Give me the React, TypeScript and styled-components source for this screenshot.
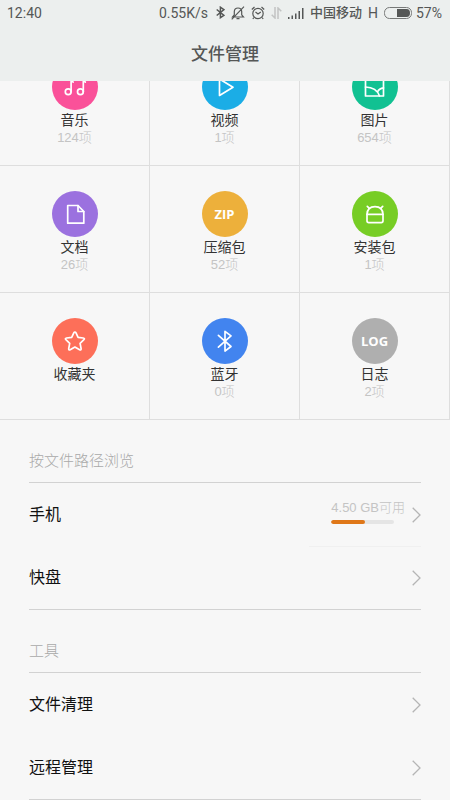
import React from "react";
import styled, { createGlobalStyle } from "styled-components";

const GlobalStyle = createGlobalStyle`
  * { box-sizing: border-box; }
  body {
    margin: 0;
    background: #f7f7f7;
    font-family: "Liberation Sans", "Noto Sans CJK SC", sans-serif;
  }
  button {
    margin: 0;
    padding: 0;
    border: 0;
    background: none;
    font: inherit;
    color: inherit;
    cursor: pointer;
  }
`;

const Header = styled.header`
  position: sticky;
  top: 0;
  z-index: 1;
  height: 81px;
  background: #ecefee;
  color: #555756;
`;

const StatusBar = styled.div`
  display: flex;
  align-items: center;
  justify-content: space-between;
  height: 25px;
  padding: 0 8px 0 7px;
  font-family: Roboto, "Noto Sans CJK SC", sans-serif;
  font-size: 14px;
  line-height: 20px;
  white-space: nowrap;
`;

const StatusGroup = styled.div`
  display: flex;
  align-items: center;
  gap: 6px;
`;

const Speed = styled.span`
  margin-right: 2px;
`;

const Battery = styled.div`
  display: flex;
  align-items: center;
  gap: 4px;
`;

const Carrier = styled.span`
  font-size: 13px;
  font-weight: 500;
`;

const Title = styled.h1`
  margin: 0;
  padding-top: 17px;
  font-size: 17px;
  line-height: 26px;
  font-weight: 500;
  text-align: center;
`;

const Grid = styled.div`
  display: grid;
  grid-template-columns: repeat(3, 1fr);
  margin-top: -42px;
`;

const Tile = styled.button`
  display: flex;
  flex-direction: column;
  align-items: center;
  height: 127px;
  padding-top: 25px;
  border-right: 1px solid #dedede;
  border-bottom: 1px solid #dedede;
`;

const Disc = styled.span<{ $color: string }>`
  display: flex;
  align-items: center;
  justify-content: center;
  width: 46px;
  height: 46px;
  border-radius: 50%;
  background: ${(p) => p.$color};
  color: #fff;
  font-family: "Open Sans", sans-serif;
  font-size: 13px;
  font-weight: 700;
`;

const TileName = styled.span`
  font-size: 14px;
  line-height: 20px;
  color: #333;
`;

const Muted = styled.span`
  font-size: 13px;
  line-height: 16px;
  font-weight: 300;
  color: #c4c4c4;
`;

const Section = styled.section`
  margin: 0 29px;
  border-bottom: 1px solid #d2d2d2;
`;

const SectionTitle = styled.h2`
  margin: 0;
  padding: 31px 0 11px;
  border-bottom: 1px solid #d2d2d2;
  font-size: 15px;
  line-height: 20px;
  font-weight: 300;
  color: #a9a9a9;
`;

const Row = styled.button<{ $divided?: boolean }>`
  display: flex;
  align-items: center;
  width: 100%;
  height: 63px;
  background: ${(p) =>
    p.$divided
      ? "linear-gradient(#f0f0f0, #f0f0f0) right top / 112px 1px no-repeat"
      : "none"};
`;

const RowName = styled.span`
  flex: 1;
  padding-top: 1px;
  font-size: 16px;
  line-height: 24px;
  text-align: left;
  color: #111;
`;

const Storage = styled.span`
  display: flex;
  flex-direction: column;
  gap: 4px;
  margin-right: 7px;
  padding-bottom: 6px;
  text-align: left;
`;

const Meter = styled.span`
  width: 63px;
  height: 4px;
  border-radius: 2px;
  background: #e5e5e5;
  overflow: hidden;
`;

const MeterFill = styled.span`
  display: block;
  height: 100%;
  border-radius: 2px;
  background: #df7719;
`;

type Shape = "music" | "video" | "image" | "doc" | "android" | "star" | "bluetooth";

const shapes: Record<Shape, React.ReactNode> = {
  music: (
    <>
      <circle cx="16.2" cy="27.7" r="2.9" />
      <circle cx="28.4" cy="27.7" r="2.9" />
      <path d="M19.1 27.7V14q0 3 2 4M31.3 27.7V14q0 3 2 4" />
    </>
  ),
  video: <path d="M17.5 15v16.5L31 23.2Z" />,
  image: (
    <>
      <path d="M13.5 14.5h18V32h-18Z" />
      <path d="M13.5 23q11 .3 14 9M25.5 28q1.5-3.7 6-4.2" />
    </>
  ),
  doc: (
    <>
      <path d="M15.7 14.5H26l5.800 6v11.700H15.700Z" />
      <path d="M26 14.5v6h5.8" />
    </>
  ),
  android: (
    <>
      <path d="M15 23.4v6.4q0 1.800 1.800 1.800h12.400q1.800 0 1.800-1.800v-6.400Z" />
      <path d="M15 23.4q.3-7.800 8-7.800t8 7.800M15.300 15.300l2.300 2.300M30.700 15.300l-2.300 2.300" />
    </>
  ),
  star: (
    <path d="M22.9 14q.7 0 1.100.9l2.100 4.500 5.100.6q2 .4.700 1.700l-3.800 3.600 1 5.300q.1 1.900-1.500 1.200l-4.700-2.700-4.700 2.700q-1.600.7-1.500-1.200l1-5.300-3.800-3.600q-1.300-1.300.7-1.700l5.100-.6 2.100-4.500q.4-.9 1.100-.9Z" />
  ),
  bluetooth: <path d="M16.4 17.4 29 28.5l-6 4.6V13.3l6 4.6-12.6 11.2" />,
};

const ShapeIcon = ({ shape }: { shape: Shape }) => (
  <svg width="46" height="46" viewBox="0 0 46 46" fill="none" stroke="#fff" strokeWidth="1.7" strokeLinejoin="round" strokeLinecap="round" aria-hidden="true">
    {shapes[shape]}
  </svg>
);

const Chevron = () => (
  <svg width="9" height="16" viewBox="0 0 9 16" fill="none" stroke="#b5b5b5" strokeWidth="1.3" aria-hidden="true">
    <path d="M.7.7 8 8 .7 15.3" />
  </svg>
);

const StatusIcons = () => (
  <>
    <svg width="9" height="13" viewBox="0 0 9 13" fill="none" stroke="#555756" strokeWidth="1.5" aria-hidden="true">
      <path d="M.7 3.5 8 9.3l-3.6 2.4V1.2L8 3.7.7 9.5" />
    </svg>
    <svg width="14" height="14" viewBox="0 0 14 14" fill="none" stroke="#555756" strokeWidth="1.2" aria-hidden="true">
      <path d="M1.5 11h11L10.700 8.800V5.500Q10.500 2 7 2T3.300 5.500V8.800ZM5.500 12.700h3M13 .7.700 13.300" />
    </svg>
    <svg width="14" height="14" viewBox="0 0 14 14" fill="none" stroke="#555756" strokeWidth="1.2" aria-hidden="true">
      <circle cx="7" cy="7.5" r="5.2" />
      <path d="m4.500 6 2.500 2 2.800-2M.8 3.500 3.500 1M13.200 3.500 10.500 1M3 11.500 1.800 13M11 11.500l1.200 1.500" />
    </svg>
    <svg width="11" height="12" viewBox="0 0 11 12" fill="none" stroke="#c2c4c3" strokeWidth="1.5" aria-hidden="true">
      <path d="M4 0v11L.7 7.7M7 12V1l3.300 3.300" />
    </svg>
    <svg width="16" height="12" viewBox="0 0 16 12" fill="#555756" aria-hidden="true">
      <path d="M0 10h1.500v2H0ZM3.500 8.500H5V12H3.500ZM7 6.500h1.500V12H7ZM10.500 4H12v8h-1.500ZM14 1h1.500v11H14Z" />
    </svg>
  </>
);

const tiles: { name: string; count?: string; color: string; shape?: Shape; text?: string }[] = [
  { name: "音乐", count: "124项", color: "#fa5199", shape: "music" },
  { name: "视频", count: "1项", color: "#1bade6", shape: "video" },
  { name: "图片", count: "654项", color: "#11c192", shape: "image" },
  { name: "文档", count: "26项", color: "#9b71df", shape: "doc" },
  { name: "压缩包", count: "52项", color: "#edb03b", text: "ZIP" },
  { name: "安装包", count: "1项", color: "#77cd25", shape: "android" },
  { name: "收藏夹", color: "#fd6f59", shape: "star" },
  { name: "蓝牙", count: "0项", color: "#4284ef", shape: "bluetooth" },
  { name: "日志", count: "2项", color: "#afafaf", text: "LOG" },
];

export default function App() {
  const used = 54;
  return (
    <>
      <GlobalStyle />
      <Header>
        <StatusBar>
          <span>12:40</span>
          <StatusGroup>
            <Speed>0.55K/s</Speed>
            <StatusIcons />
            <Carrier>中国移动</Carrier>
            <span>H</span>
            <Battery>
              <svg width="28" height="12" viewBox="0 0 28 12" aria-hidden="true">
                <rect x=".5" y=".5" width="27" height="11" rx="5" fill="none" stroke="#777978" />
                <path d="M13 2h9.500Q26 2 26 6t-3.500 4H13Z" fill="#555756" />
              </svg>
              <span>57%</span>
            </Battery>
          </StatusGroup>
        </StatusBar>
        <Title>文件管理</Title>
      </Header>
      <main>
        <Grid>
          {tiles.map((t) => (
            <Tile key={t.name} type="button">
              <Disc $color={t.color}>{t.shape ? <ShapeIcon shape={t.shape} /> : t.text}</Disc>
              <TileName>{t.name}</TileName>
              {t.count && <Muted>{t.count}</Muted>}
            </Tile>
          ))}
        </Grid>
        <Section>
          <SectionTitle>按文件路径浏览</SectionTitle>
          <Row type="button">
            <RowName>手机</RowName>
            <Storage>
              <Muted>4.50 GB可用</Muted>
              <Meter>
                <MeterFill style={{ width: `${used}%` }} />
              </Meter>
            </Storage>
            <Chevron />
          </Row>
          <Row type="button" $divided>
            <RowName>快盘</RowName>
            <Chevron />
          </Row>
        </Section>
        <Section>
          <SectionTitle>工具</SectionTitle>
          <Row type="button">
            <RowName>文件清理</RowName>
            <Chevron />
          </Row>
          <Row type="button">
            <RowName>远程管理</RowName>
            <Chevron />
          </Row>
        </Section>
      </main>
    </>
  );
}
